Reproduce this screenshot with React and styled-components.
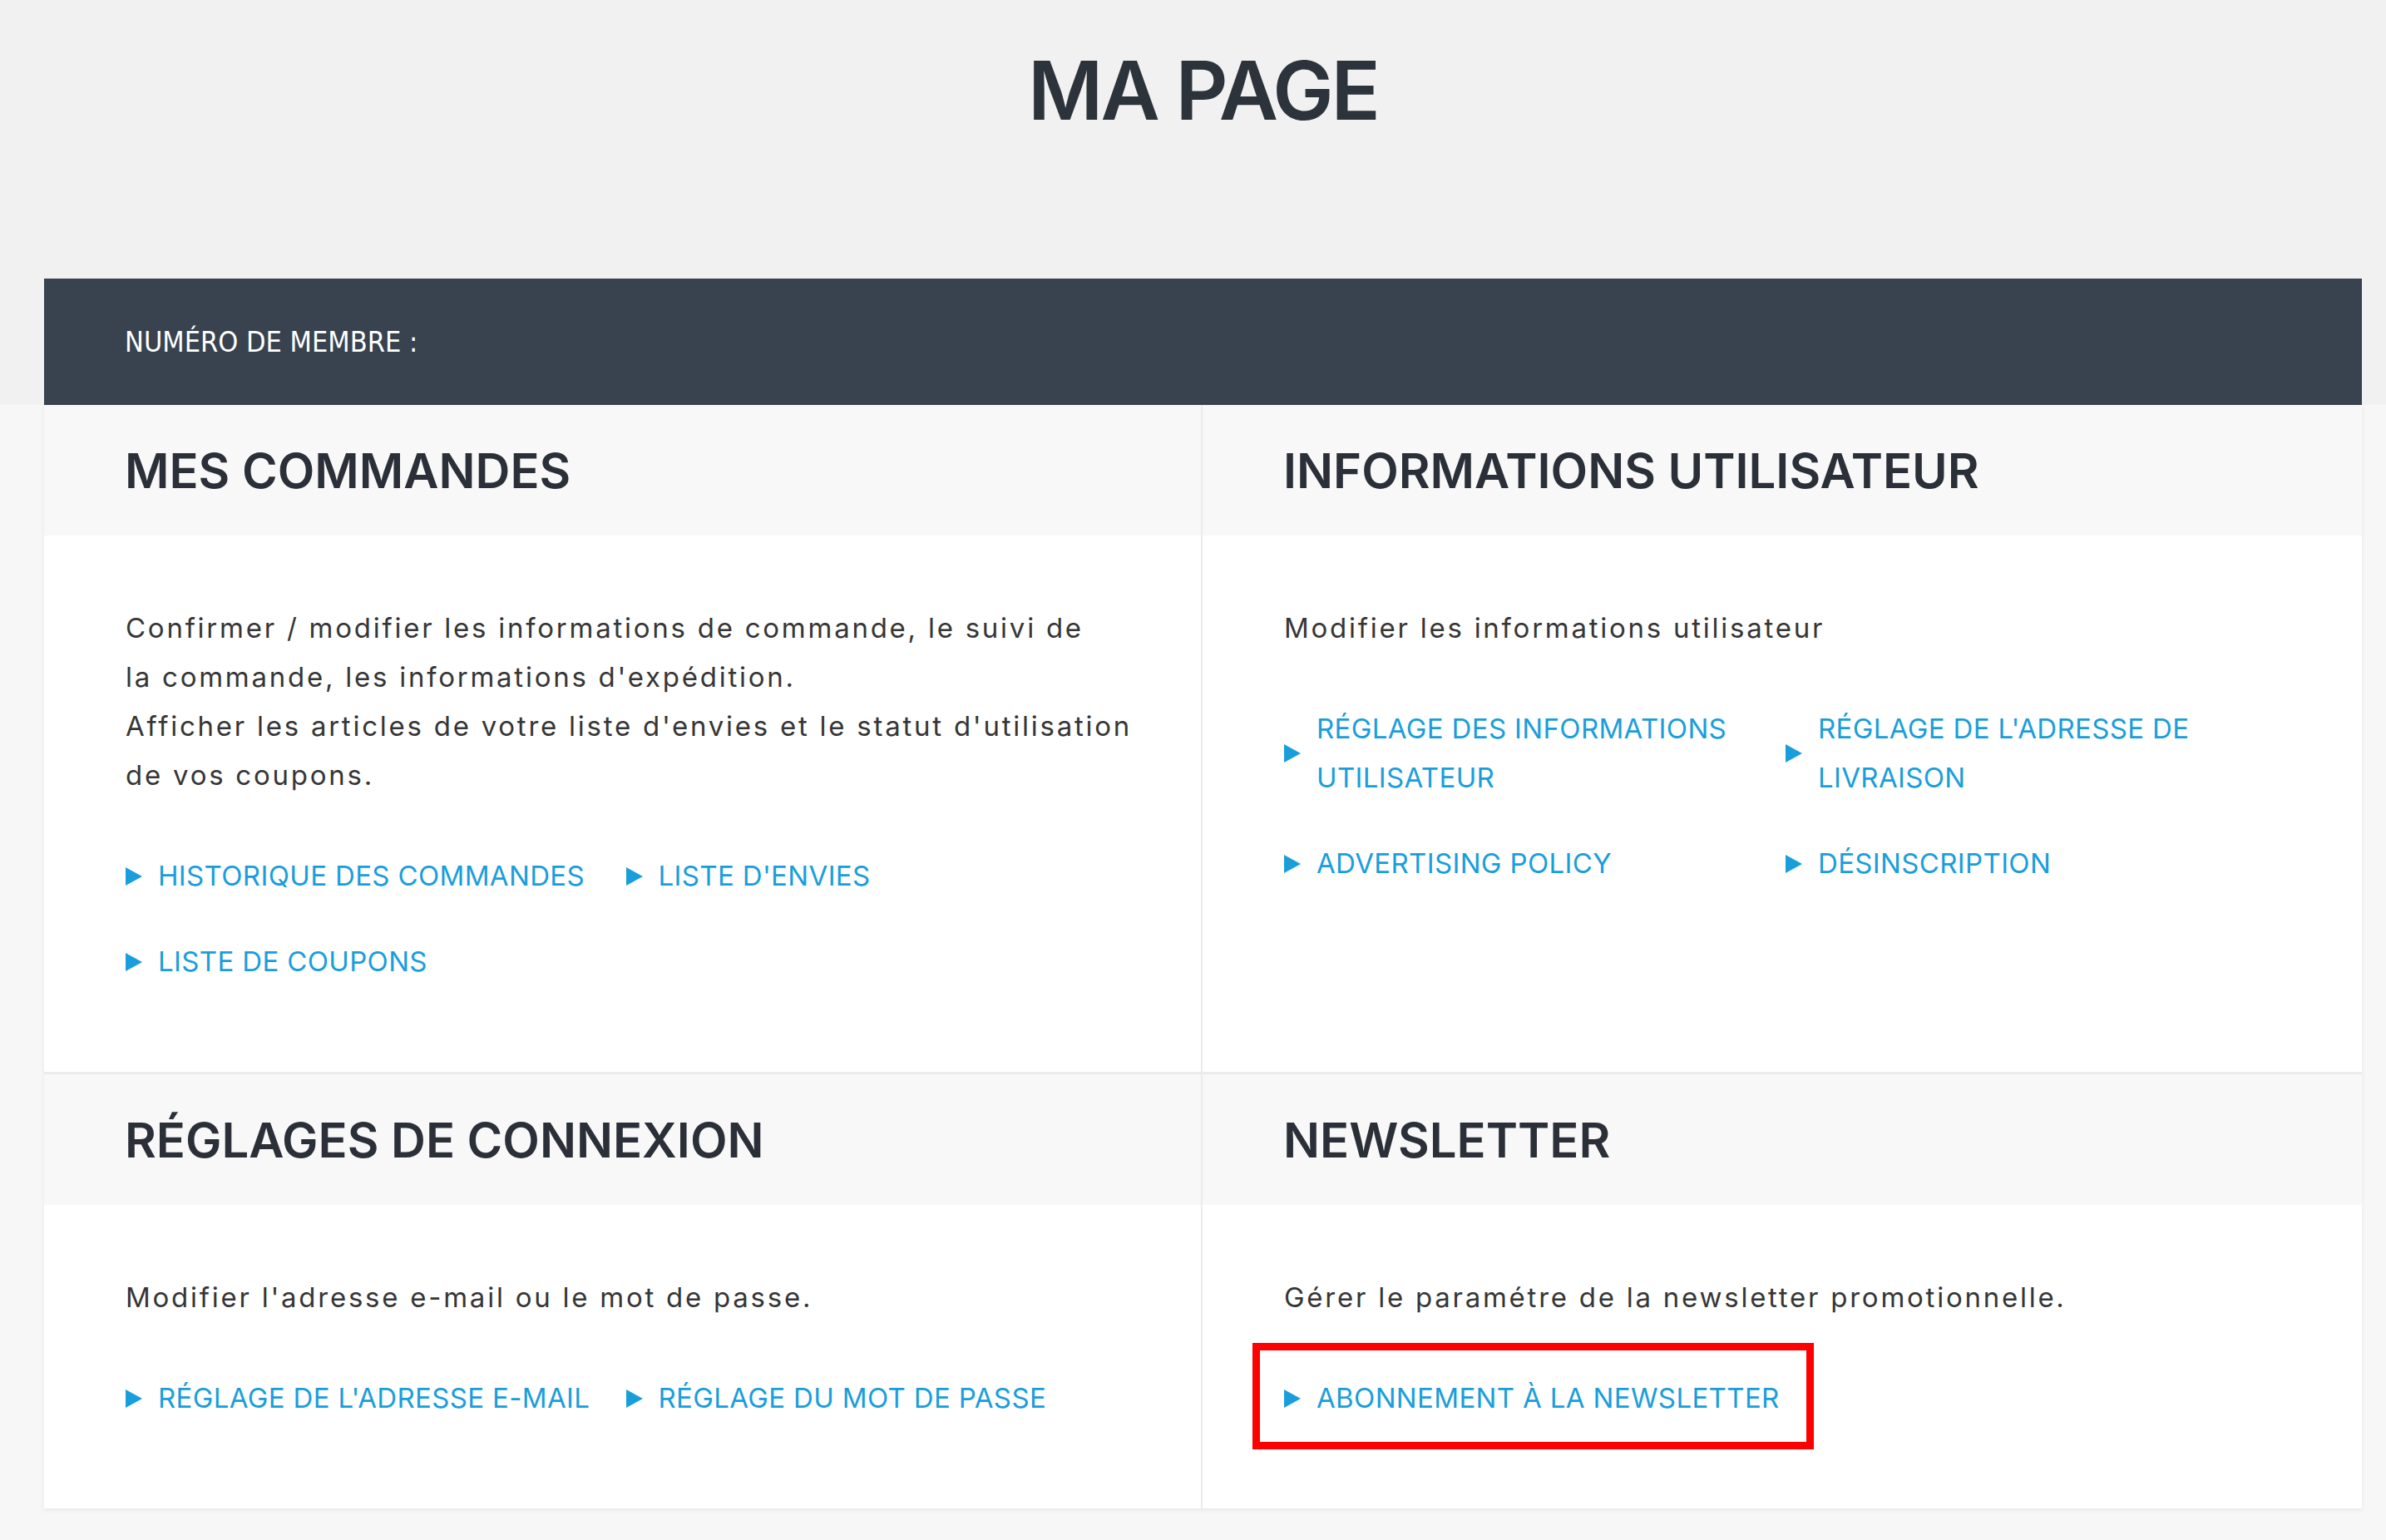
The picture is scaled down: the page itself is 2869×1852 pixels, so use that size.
import React from 'react';
import styled, { createGlobalStyle } from 'styled-components';

const GlobalStyle = createGlobalStyle`
    html, body {
        margin: 0;
        padding: 0;
    }
    body {
        background: #f7f7f7;
        font-family: Inter, "Noto Sans", sans-serif;
    }
`;

const Top = styled.header`
    background: #f1f1f1;
    padding-top: 49px;
`;

const Main = styled.main`
    padding-bottom: 40px;
`;

const Wrapper = styled.div`
    width: 2787px;
    margin: 0 29px 0 53px;
`;

const Title = styled.h1`
    margin: 0 0 167px;
    text-align: center;
    font-size: 98px;
    font-weight: 600;
    line-height: 119px;
    letter-spacing: -3px;
    color: #2d333b;
`;

const MemberBand = styled.div`
    height: 152px;
    display: flex;
    align-items: center;
    padding-left: 97px;
    background: #38434f;
    color: #fff;
    font-family: "DejaVu Sans Condensed", "DejaVu Sans", sans-serif;
    font-stretch: condensed;
    font-size: 34px;
`;

const Grid = styled.div`
    display: grid;
    grid-template-columns: 1391px 1394px;
    gap: 3px 2px;
    background: #ebebeb;
    box-shadow: 0 2px 6px rgba(0, 0, 0, 0.07);
`;

const Panel = styled.section`
    background: #fff;
    display: flex;
    flex-direction: column;
`;

const PanelHeader = styled.div`
    height: 157px;
    display: flex;
    align-items: center;
    padding: 0 97px;
    background: #f8f8f8;
`;

const Heading = styled.h2`
    margin: 0;
    font-size: 58px;
    font-weight: 600;
    line-height: 1;
    color: #2b3038;
`;

const PanelBody = styled.div`
    padding: 82px 90px 103px 98px;
`;

const Text = styled.p`
    margin: 0;
    font-size: 33px;
    line-height: 59px;
    letter-spacing: 2.75px;
    color: #363636;
    white-space: nowrap;
`;

const LinkGrid = styled.div`
    display: grid;
    grid-template-columns: 1fr 1fr;
    row-gap: 44px;
    margin-top: 62px;
`;

const LinkItem = styled.a`
    position: relative;
    justify-self: start;
    display: flex;
    align-items: center;
    gap: 19px;
    text-decoration: none;
    cursor: pointer;

    ${props => props.highlighted && `
        &::after {
            content: '';
            position: absolute;
            top: -37px;
            bottom: -32px;
            left: -38px;
            right: -41px;
            border: 9px solid #ff0000;
        }
    `}
`;

const Arrow = styled.span`
    flex-shrink: 0;
    width: 0;
    height: 0;
    border-left: 20px solid #1a9edb;
    border-top: 11px solid transparent;
    border-bottom: 11px solid transparent;
`;

const LinkText = styled.span`
    font-size: 33px;
    line-height: 59px;
    letter-spacing: 0.35px;
    color: #1a9edb;
    text-transform: uppercase;
`;

const sections = [
    {
        title: 'MES COMMANDES',
        text: [
            'Confirmer / modifier les informations de commande, le suivi de',
            "la commande, les informations d'expédition.",
            "Afficher les articles de votre liste d'envies et le statut d'utilisation",
            'de vos coupons.',
        ],
        links: ['Historique des commandes', "Liste d'envies", 'Liste de coupons'],
    },
    {
        title: 'INFORMATIONS UTILISATEUR',
        text: ['Modifier les informations utilisateur'],
        links: [
            'Réglage des informations utilisateur',
            "Réglage de l'adresse de livraison",
            'Advertising policy',
            'Désinscription',
        ],
    },
    {
        title: 'RÉGLAGES DE CONNEXION',
        text: ["Modifier l'adresse e-mail ou le mot de passe."],
        links: ["Réglage de l'adresse e-mail", 'Réglage du mot de passe'],
    },
    {
        title: 'NEWSLETTER',
        text: ['Gérer le paramétre de la newsletter promotionnelle.'],
        links: ['Abonnement à la newsletter'],
        highlight: 0,
    },
];

export default () => (
    <>
        <GlobalStyle />
        <Top>
            <Wrapper>
                <Title>MA PAGE</Title>
                <MemberBand>NUMÉRO DE MEMBRE :</MemberBand>
            </Wrapper>
        </Top>
        <Main>
            <Wrapper>
                <Grid>
                    {sections.map(section => (
                        <Panel key={section.title}>
                            <PanelHeader>
                                <Heading>{section.title}</Heading>
                            </PanelHeader>
                            <PanelBody>
                                <Text>
                                    {section.text.map((line, i) => (
                                        <React.Fragment key={line}>
                                            {i > 0 && <br />}
                                            {line}
                                        </React.Fragment>
                                    ))}
                                </Text>
                                <LinkGrid>
                                    {section.links.map((link, i) => (
                                        <LinkItem key={link} highlighted={section.highlight === i}>
                                            <Arrow />
                                            <LinkText>{link}</LinkText>
                                        </LinkItem>
                                    ))}
                                </LinkGrid>
                            </PanelBody>
                        </Panel>
                    ))}
                </Grid>
            </Wrapper>
        </Main>
    </>
);
